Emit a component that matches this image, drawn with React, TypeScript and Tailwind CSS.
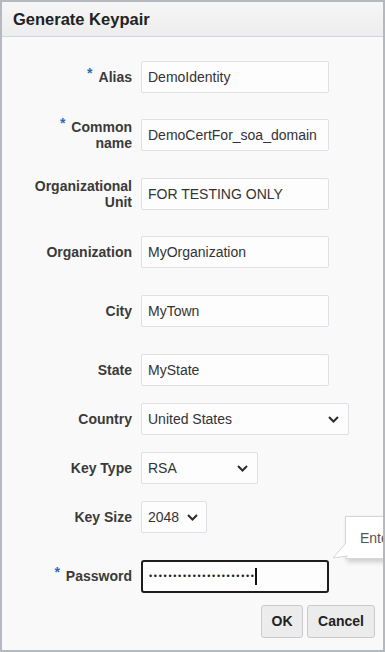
import React from "react";

const font = { fontFamily: '"Liberation Sans", Arial, sans-serif' };

function Star() {
  return <span className="relative -top-[4px] mr-[6px] text-[#1f6fbf]">*</span>;
}

function Chevron() {
  return (
    <svg width="11" height="7" viewBox="0 0 11 7" className="shrink-0">
      <path d="M1 1 L5.5 5.5 L10 1" fill="none" stroke="#2b2b2b" strokeWidth="2" />
    </svg>
  );
}

function TextRow({ label, value, star, mt, twoLine }: { label: React.ReactNode; value: string; star?: boolean; mt: string; twoLine?: boolean }) {
  return (
    <div className={`flex items-center ${mt}`}>
      <div className={`w-[130px] text-right text-[14px] font-bold text-[#3a3a3a] ${twoLine ? "leading-[16px]" : ""}`}>
        {star && <Star />}
        {label}
      </div>
      <div className="ml-[9px] flex h-[32px] w-[188px] items-center rounded-[2px] border border-[#dde0e4] bg-[#fdfdfe] pl-[6px] text-[14px] text-[#333]">
        {value}
      </div>
    </div>
  );
}

function SelectRow({ label, value, w, mt, pr }: { label: string; value: string; w: string; mt: string; pr: string }) {
  return (
    <div className={`flex items-center ${mt}`}>
      <div className="w-[130px] text-right text-[14px] font-bold text-[#3a3a3a]">{label}</div>
      <div className={`ml-[9px] flex h-[32px] ${w} items-center justify-between rounded-[2px] border border-[#dde0e4] bg-[#fdfdfe] pl-[6px] ${pr} text-[14px] text-[#333]`}>
        <span>{value}</span>
        <Chevron />
      </div>
    </div>
  );
}

export default function App() {
  return (
    <div style={font} className="relative h-[652px] w-[385px] overflow-hidden border-2 border-[#b4b9bf] bg-[#f9f9f9]">
      <div className="flex h-[35px] items-center border-b border-[#cfd6dd] bg-gradient-to-b from-[#f6f6f6] to-[#ededed] pl-[11px] pt-[1px]">
        <span className="text-[16.5px] font-bold text-[#222]">Generate Keypair</span>
      </div>
      <div className="flex flex-col pt-[24px]">
        <TextRow label="Alias" value="DemoIdentity" star mt="mt-0" />
        <TextRow
          label={<>Common<br />name</>}
          value="DemoCertFor_soa_domain"
          star
          twoLine
          mt="mt-[26px]"
        />
        <TextRow label={<>Organizational<br />Unit</>} value="FOR TESTING ONLY" twoLine mt="mt-[27px]" />
        <TextRow label="Organization" value="MyOrganization" mt="mt-[26px]" />
        <TextRow label="City" value="MyTown" mt="mt-[27px]" />
        <TextRow label="State" value="MyState" mt="mt-[27px]" />
        <SelectRow label="Country" value="United States" w="w-[208px]" pr="pr-[9px]" mt="mt-[17px]" />
        <SelectRow label="Key Type" value="RSA" w="w-[117px]" pr="pr-[9px]" mt="mt-[17px]" />
        <SelectRow label="Key Size" value="2048" w="w-[66px]" pr="pr-[8px]" mt="mt-[17px]" />
        <div className="mt-[27px] flex items-center">
          <div className="w-[130px] text-right text-[14px] font-bold text-[#3a3a3a]">
            <Star />
            Password
          </div>
          <div className="ml-[9px] flex h-[33px] w-[188px] items-center rounded-[3px] border-2 border-[#1e1e1e] bg-[#fdfdfe] pl-[6px]">
            <span className="text-[9px] leading-none tracking-[1.7px] text-[#222]">
              {"•".repeat(22)}
            </span>
            <span className="-ml-[1px] h-[17px] w-[2px] bg-[#111]" />
          </div>
        </div>
        <div className="mt-[12px] flex justify-end gap-[4px] pr-[8px]">
          <div className="flex h-[33px] w-[42px] items-center justify-center rounded-[3px] border border-[#c7cbcf] bg-[#ececec] text-[14px] font-bold text-[#222]">
            OK
          </div>
          <div className="flex h-[33px] w-[68px] items-center justify-center rounded-[3px] border border-[#c7cbcf] bg-[#ececec] text-[14px] font-bold text-[#222]">
            Cancel
          </div>
        </div>
      </div>
      <div className="absolute left-[343px] top-[514px] h-[43px] w-[140px] border border-[#d6d6d6] bg-white shadow-[2px_3px_5px_rgba(0,0,0,0.18)]">
        <span className="absolute left-[14px] top-[11px] whitespace-nowrap text-[14px] text-[#555]">Enter password</span>
      </div>
      <svg className="absolute left-[329px] top-[540px]" width="20" height="20" viewBox="0 0 20 20">
        <path d="M15 1 L2 16 L17 14 Z" fill="#ffffff" />
        <path d="M15 1 L2 16 L17 14" fill="none" stroke="#d6d6d6" strokeWidth="1" />
      </svg>
    </div>
  );
}
